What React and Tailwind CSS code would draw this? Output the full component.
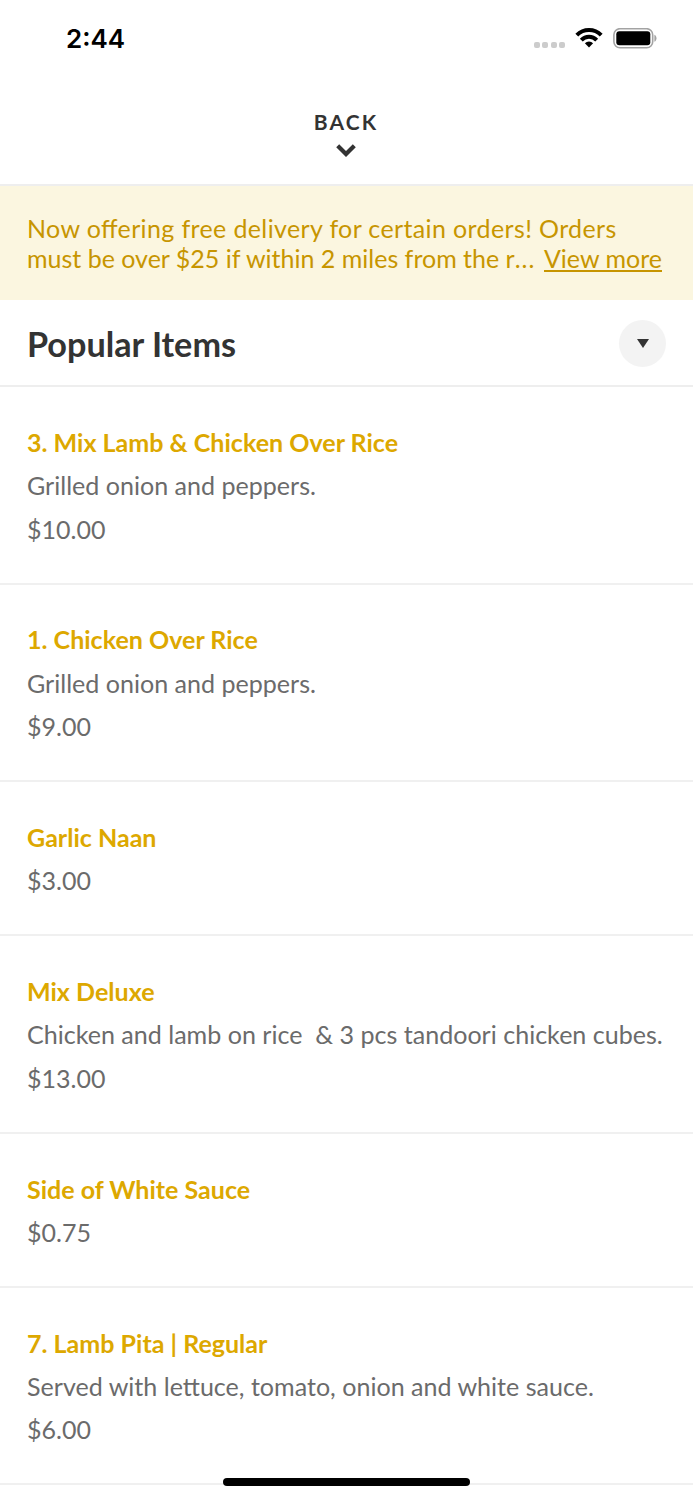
const items = [
  {
    title: "3. Mix Lamb & Chicken Over Rice",
    description: "Grilled onion and peppers.",
    price: "$10.00",
  },
  {
    title: "1. Chicken Over Rice",
    description: "Grilled onion and peppers.",
    price: "$9.00",
  },
  { title: "Garlic Naan", price: "$3.00" },
  {
    title: "Mix Deluxe",
    description: "Chicken and lamb on rice  & 3 pcs tandoori chicken cubes.",
    price: "$13.00",
  },
  { title: "Side of White Sauce", price: "$0.75" },
  {
    title: "7. Lamb Pita | Regular",
    description: "Served with lettuce, tomato, onion and white sauce.",
    price: "$6.00",
  },
];

function StatusBar() {
  return (
    <div className="flex h-[76px] items-center justify-between pl-[66px] pr-[36px]">
      <span className="mt-px font-['Inter',sans-serif] text-[26px] font-semibold leading-8 text-black">
        2:44
      </span>
      <div className="flex items-center">
        <div className="mt-[13px] flex gap-[2.4px]">
          {[0, 1, 2, 3].map((dot) => (
            <span key={dot} className="size-[6px] rounded-[2px] bg-[#cccccc]" />
          ))}
        </div>
        <svg className="ml-[10px] h-[20px] w-[28px]" viewBox="0 0 28 20">
          <g fill="none" stroke="#000" strokeWidth="4">
            <path d="M1.8 7.2a17.2 17.2 0 0 1 24.4 0" />
            <path d="M6.3 12.1a10.8 10.8 0 0 1 15.4 0" />
          </g>
          <path d="M14 19.5l-4.1-4.2a5.8 5.8 0 0 1 8.2 0z" />
        </svg>
        <svg className="ml-[10px] h-[21px] w-[44px]" viewBox="0 0 44 21">
          <rect x="0.9" y="0.7" width="38.8" height="19" rx="6" fill="none" stroke="#a3a3a3" strokeWidth="1.6" />
          <rect x="3.3" y="3.2" width="34" height="14" rx="3" />
          <path d="M41.4 6.8v7c2.8-1.2 2.8-5.8 0-7z" fill="#a3a3a3" />
        </svg>
      </div>
    </div>
  );
}

function MenuItem({ item }) {
  return (
    <li className="border-b-2 border-[#f0f0f0] px-[27px] pb-[31.3px] pt-[32.9px]">
      <h2 className="text-[25.05px] font-bold leading-[44px] text-[#dda800]">
        {item.title}
      </h2>
      {item.description && (
        <p className="whitespace-pre pt-[0.4px] text-[25.07px] leading-[43.2px] text-[#6b6b6b]">
          {item.description}
        </p>
      )}
      <p className="pt-[0.3px] text-[25px] leading-[43.5px] text-[#6b6b6b]">
        {item.price}
      </p>
    </li>
  );
}

function App() {
  return (
    <div className="relative h-[1500px] overflow-hidden bg-white font-['Lato',sans-serif]">
      <StatusBar />

      <header className="flex h-[110px] flex-col items-center border-b-2 border-[#eeeeee] pt-[31px]">
        <span className="mr-px text-[21px] font-bold leading-[30px] tracking-[2.1px] text-[#333333]">
          BACK
        </span>
        <svg className="mr-[2px] mt-[6px] h-[15px] w-[20px]" viewBox="0 0 20 15">
          <path d="M1.7 2.8l8.3 8.3 8.3-8.3" fill="none" stroke="#333" strokeWidth="4.2" />
        </svg>
      </header>

      <div className="h-[114px] bg-[#fbf6e0] px-[27px] pt-[27px] text-[25px] leading-[30px] text-[#c79500]">
        <p className="tracking-[0.37px] [font-feature-settings:'liga'_1]">
          Now offering free delivery for certain orders! Orders
        </p>
        <div className="flex justify-between pr-[4px]">
          <p>
            must be over $25 if within 2 miles from the r
            <span className="tracking-[1px]">...</span>
          </p>
          <span className="h-[29px] border-b-2 border-[#c79500]">View more</span>
        </div>
      </div>

      <div className="flex h-[87px] items-center justify-between border-b-2 border-[#eeeeee] px-[27px] pt-[2px]">
        <h1 className="text-[34.2px] font-bold leading-10 text-[#333333]">
          Popular Items
        </h1>
        <button className="flex size-[47px] items-center justify-center rounded-full bg-[#f3f3f3]">
          <svg className="ml-px h-[9px] w-[12px]" viewBox="0 0 12 9">
            <path d="M0 0h12L6 9z" fill="#333" />
          </svg>
        </button>
      </div>

      <ul>
        {items.map((item) => (
          <MenuItem key={item.title} item={item} />
        ))}
      </ul>

      {/* Home indicator */}
      <div className="absolute left-[223px] top-[1478px] h-[8px] w-[247px] rounded-full bg-black" />
    </div>
  );
}

export default App;
